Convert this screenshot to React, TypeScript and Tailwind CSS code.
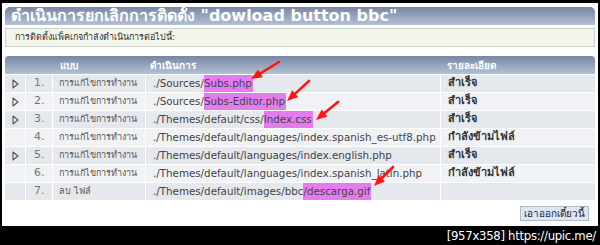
const rows: { arrow: boolean; type: string; path: string; hl?: string; detail: string }[] = [
  { arrow: true, type: 'การแก้ไขการทำงาน', path: './Sources/', hl: 'Subs.php', detail: 'สำเร็จ' },
  { arrow: true, type: 'การแก้ไขการทำงาน', path: './Sources/', hl: 'Subs-Editor.php', detail: 'สำเร็จ' },
  { arrow: true, type: 'การแก้ไขการทำงาน', path: './Themes/default/css/', hl: 'Index.css', detail: 'สำเร็จ' },
  { arrow: false, type: 'การแก้ไขการทำงาน', path: './Themes/default/languages/index.spanish_es-utf8.php', detail: 'กำลังข้ามไฟล์' },
  { arrow: true, type: 'การแก้ไขการทำงาน', path: './Themes/default/languages/index.english.php', detail: 'สำเร็จ' },
  { arrow: false, type: 'การแก้ไขการทำงาน', path: './Themes/default/languages/index.spanish_latin.php', detail: 'กำลังข้ามไฟล์' },
  { arrow: false, type: 'ลบ ไฟล์', path: './Themes/default/images/bbc', hl: '/descarga.gif', detail: '' },
];

const cols = 'grid grid-cols-[20px_27px_93px_295px_1fr]';

function Tri() {
  return (
    <svg width="7" height="10" viewBox="0 0 7 10">
      <path d="M1 1 L6 5 L1 9 Z" fill="none" stroke="#555" strokeWidth="1.1" strokeLinejoin="round" />
    </svg>
  );
}

// red annotation arrows drawn over the table
const arrows = [
  [279, 62, 251, 79],
  [309, 81, 287, 101],
  [338, 102, 316, 120],
  [393, 167, 374, 186],
];

function Arrow({ x1, y1, x2, y2 }: { x1: number; y1: number; x2: number; y2: number }) {
  const a = Math.atan2(y2 - y1, x2 - x1);
  const len = 11;
  const w = 4.5;
  const bx = x2 - len * Math.cos(a);
  const by = y2 - len * Math.sin(a);
  const px = -Math.sin(a) * w;
  const py = Math.cos(a) * w;
  return (
    <g>
      <line x1={x1} y1={y1} x2={bx} y2={by} stroke="#ff1515" strokeWidth="2.6" strokeLinecap="round" />
      <polygon points={`${x2},${y2} ${bx + px},${by + py} ${bx - px},${by - py}`} fill="#ff1515" />
    </g>
  );
}

export default function App() {
  return (
    <div className="relative w-[600px] h-[245px] bg-black overflow-hidden flex flex-col font-['Tahoma','DejaVu_Sans',sans-serif]">
      <div className="mx-[2px] mt-[3px] h-[223px] bg-white px-[3px] pt-[4px] flex flex-col">
        {/* title */}
        <div className="h-[18px] rounded-t-[5px] bg-gradient-to-b from-[#7886a3] to-[#b3c1d6] flex items-center pl-[6px] text-white font-bold text-[16px] leading-none whitespace-nowrap">
          ดำเนินการยกเลิกการติดตั้ง "dowload button bbc"
        </div>
        <div className="mt-[3px] h-[19px] border border-[#cdd3c8] bg-[#f1f5ec] flex items-center pl-[9px] text-[9px] text-[#333]">
          การติดตั้งแพ็คเกจกำลังดำเนินการต่อไปนี้:
        </div>

        {/* table */}
        <div className="mt-[9px]">
          <div className={`${cols} h-[18px] rounded-t-[4px] bg-gradient-to-b from-[#7886a3] to-[#b3c1d6] text-white font-bold text-[10px] items-center`}>
            <div />
            <div />
            <div className="pl-[8px]">แบบ</div>
            <div className="pl-[5px]">ดำเนินการ</div>
            <div className="pl-[7px]">รายละเอียด</div>
          </div>
          {rows.map((r, i) => (
            <div
              key={i}
              className={`${cols} h-[18px] border-t border-white ${i % 2 === 0 ? 'bg-[#e5e8ed]' : 'bg-[#f0f2f5]'}`}
            >
              <div className="flex items-center justify-center">{r.arrow && <Tri />}</div>
              <div className="flex items-center pl-[8px] border-l border-white text-[11px] text-[#777] font-['DejaVu_Sans',sans-serif]">
                {i + 1}.
              </div>
              <div className="flex items-center pl-[6px] border-l border-white text-[9px] text-[#555] whitespace-nowrap">
                {r.type}
              </div>
              <div className="flex items-center pl-[7px] border-l border-white text-[10.3px] text-[#444] font-['DejaVu_Sans',sans-serif] whitespace-nowrap">
                <span>{r.path}</span>
                {r.hl && <span className="bg-[#e47cf0] h-[17px] flex items-center pr-[1px]">{r.hl}</span>}
              </div>
              <div className="flex items-center pl-[7px] border-l border-white text-[11px] font-bold text-[#333] whitespace-nowrap">
                {r.detail}
              </div>
            </div>
          ))}
        </div>

        <div className="mt-[6px] flex justify-end pr-[6px]">
          <button className="h-[15px] px-[3px] border border-[#a9bdd2] bg-[#dbe7f3] text-[10px] leading-none text-[#223] flex items-center">
            เอาออกเดี๋ยวนี้
          </button>
        </div>
      </div>

      <div className="flex-1 flex items-center justify-end pr-[4px] text-white text-[13px] leading-none font-['DejaVu_Sans_Condensed','DejaVu_Sans',sans-serif] tracking-[-0.3px]">
        [957x358] https://upic.me/
      </div>

      <svg className="absolute inset-0 pointer-events-none" width="600" height="245">
        {arrows.map(([x1, y1, x2, y2], i) => (
          <Arrow key={i} x1={x1} y1={y1} x2={x2} y2={y2} />
        ))}
      </svg>
    </div>
  );
}
